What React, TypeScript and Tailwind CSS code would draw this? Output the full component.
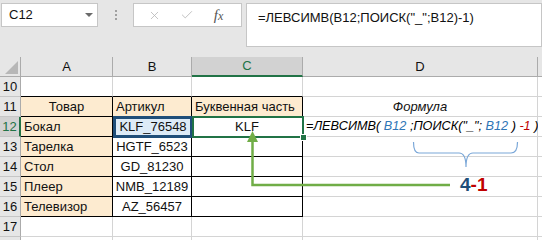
import { X, Check } from 'lucide-react';

const cols = ['A', 'B', 'C', 'D'];

type Cell = { t?: string; align?: string; beige?: boolean; table?: boolean };

const rows: { n: number; cells: Cell[] }[] = [
    { n: 10, cells: [{}, {}, {}, {}] },
    {
        n: 11,
        cells: [
            { t: 'Товар', align: 'justify-center', beige: true, table: true },
            { t: 'Артикул', align: 'justify-start pl-[3px]', beige: true, table: true },
            { t: 'Буквенная часть', align: 'justify-start pl-[3px]', beige: true, table: true },
            { t: 'Формула', align: 'justify-center italic' },
        ],
    },
    {
        n: 12,
        cells: [
            { t: 'Бокал', align: 'justify-start pl-[3px]', beige: true, table: true },
            { t: 'KLF_76548', align: 'justify-center', table: true },
            { t: 'KLF', align: 'justify-center', table: true },
            {},
        ],
    },
    {
        n: 13,
        cells: [
            { t: 'Тарелка', align: 'justify-start pl-[3px]', beige: true, table: true },
            { t: 'HGTF_6523', align: 'justify-center', table: true },
            { table: true },
            {},
        ],
    },
    {
        n: 14,
        cells: [
            { t: 'Стол', align: 'justify-start pl-[3px]', beige: true, table: true },
            { t: 'GD_81230', align: 'justify-center', table: true },
            { table: true },
            {},
        ],
    },
    {
        n: 15,
        cells: [
            { t: 'Плеер', align: 'justify-start pl-[3px]', beige: true, table: true },
            { t: 'NMB_12189', align: 'justify-center', table: true },
            { table: true },
            {},
        ],
    },
    {
        n: 16,
        cells: [
            { t: 'Телевизор', align: 'justify-start pl-[3px]', beige: true, table: true },
            { t: 'AZ_56457', align: 'justify-center', table: true },
            { table: true },
            {},
        ],
    },
    { n: 17, cells: [{}, {}, {}, {}] },
    { n: 18, cells: [{}, {}, {}, {}] },
];

const FormulaText = () => (
    <span className="italic whitespace-nowrap text-black text-[12.7px]">
        =ЛЕВСИМВ( <span className="text-[#2e75b6]">B12</span> ;ПОИСК("_"; <span className="text-[#2e75b6]">B12</span> ) <span className="text-[#c00000]">-1</span> )
    </span>
);

export default function App() {
    return (
        <div className="w-[542px] h-[240px] overflow-hidden bg-white font-['Liberation_Sans',Arial,sans-serif] text-[13px] text-[#111]">
            {/* formula bar */}
            <div className="h-[57px] bg-[#e6e6e6] flex items-start pt-[3px] pl-[1px]">
                <div className="w-[97px] h-[24px] bg-white border border-[#c6c6c6] flex items-center justify-between pl-[7px] pr-[4px]">
                    <span>C12</span>
                    <span className="w-0 h-0 border-l-[4px] border-r-[4px] border-t-[4px] border-l-transparent border-r-transparent border-t-[#6a6a6a]" />
                </div>
                <div className="w-[35px] h-[24px] flex flex-col items-center justify-center gap-[2px]">
                    <span className="w-[2px] h-[2px] bg-[#a0a0a0]" />
                    <span className="w-[2px] h-[2px] bg-[#a0a0a0]" />
                    <span className="w-[2px] h-[2px] bg-[#a0a0a0]" />
                </div>
                <div className="w-[109px] h-[24px] bg-white border border-[#c6c6c6] flex items-center justify-around pl-[4px] pr-[8px]">
                    <X className="w-[13px] h-[13px] text-[#b8b8b8]" strokeWidth={1.5} />
                    <Check className="w-[14px] h-[14px] text-[#b8b8b8]" strokeWidth={1.5} />
                    <span className="font-['Liberation_Serif',serif] italic text-[15px] text-[#555] leading-none">
                        f<span className="text-[12px]">x</span>
                    </span>
                </div>
                <div className="ml-[4px] flex-1 h-[44px] bg-white border border-[#c6c6c6] pl-[11px] pt-[4px]">
                    =ЛЕВСИМВ(B12;ПОИСК("_";B12)-1)
                </div>
            </div>

            {/* sheet */}
            <div className="relative">
                <div className="grid grid-cols-[21px_92px_79px_111px_235px_1fr]">
                    <div className="h-[20px] bg-[#e6e6e6] border-r border-b border-[#ababab] relative">
                        <svg className="absolute right-[2px] bottom-[2px]" width="13" height="13" viewBox="0 0 13 13">
                            <path d="M13 0 L13 13 L0 13 Z" fill="#b7b7b7" />
                        </svg>
                    </div>
                    {cols.map((c) => (
                        <div
                            key={c}
                            className={
                                c === 'C'
                                    ? 'h-[20px] bg-[#d2d2d2] border-r border-b-2 border-r-[#ababab] border-b-[#217346] flex items-center justify-center text-[#217346]'
                                    : 'h-[20px] bg-[#e6e6e6] border-r border-b border-[#ababab] flex items-center justify-center'
                            }
                        >
                            {c}
                        </div>
                    ))}
                    <div className="h-[20px] bg-[#e6e6e6] border-b border-[#ababab]" />

                    {rows.map((r) => (
                        <>
                            <div
                                key={'h' + r.n}
                                className={
                                    r.n === 12
                                        ? 'h-[20px] bg-[#d2d2d2] border-r-2 border-b border-r-[#217346] border-b-[#c6c6c6] flex items-center justify-center text-[#217346]'
                                        : 'h-[20px] bg-[#e6e6e6] border-r border-b border-r-[#ababab] border-b-[#c6c6c6] flex items-center justify-center'
                                }
                            >
                                {r.n < 18 ? r.n : ''}
                            </div>
                            {r.cells.map((cell, i) => {
                                const nextTable = rows.find((x) => x.n === r.n + 1)?.cells[i]?.table;
                                const rightBlack = cell.table;
                                const bottomBlack = cell.table || nextTable;
                                return (
                                    <div
                                        key={r.n + '-' + i}
                                        className={[
                                            'h-[20px] border-r border-b flex items-center whitespace-nowrap',
                                            cell.beige ? 'bg-[#fdebd0]' : 'bg-white',
                                            rightBlack ? 'border-r-black' : 'border-r-[#d4d4d4]',
                                            bottomBlack ? 'border-b-black' : 'border-b-[#d4d4d4]',
                                            cell.align ?? '',
                                        ].join(' ')}
                                    >
                                        {r.n === 12 && i === 3 ? (
                                            <div className="pl-[3px]">
                                                <FormulaText />
                                            </div>
                                        ) : (
                                            cell.t
                                        )}
                                    </div>
                                );
                            })}
                            <div key={'e' + r.n} className="h-[20px] border-b border-[#d4d4d4] bg-white" />
                        </>
                    ))}
                </div>

                {/* B12 reference highlight */}
                <div className="absolute left-[113px] top-[59px] w-[80px] h-[22px] border-[3px] border-[#1f4e79] bg-[#ddebf7] flex items-center justify-center">
                    KLF_76548
                </div>

                {/* C12 selection */}
                <div className="absolute left-[192px] top-[59px] w-[112px] h-[22px] border-2 border-[#217346]" />
                <div className="absolute left-[300px] top-[77px] w-[7px] h-[7px] bg-[#217346] border border-white" />

                {/* brace and arrow */}
                <svg className="absolute left-0 top-0" width="542" height="183" viewBox="0 57 542 183">
                    <path
                        d="M413.5 142 Q413.5 153 419 153 L459 153 Q466 153 466 167 Q466 153 473 153 L511 153 Q517.5 153 517.5 142"
                        fill="none"
                        stroke="#7aa7d8"
                        strokeWidth="1.2"
                    />
                    <path d="M252.5 141 L252.5 185 L450 185" fill="none" stroke="#70ad47" strokeWidth="2.5" />
                    <path d="M252.5 131 L247 142 L258 142 Z" fill="#70ad47" />
                </svg>

                <div className="absolute left-[460px] top-[118px] text-[19px] font-bold leading-none">
                    <span className="text-[#1f4e79]">4</span>
                    <span className="text-[#c00000]">-1</span>
                </div>
            </div>
        </div>
    );
}
